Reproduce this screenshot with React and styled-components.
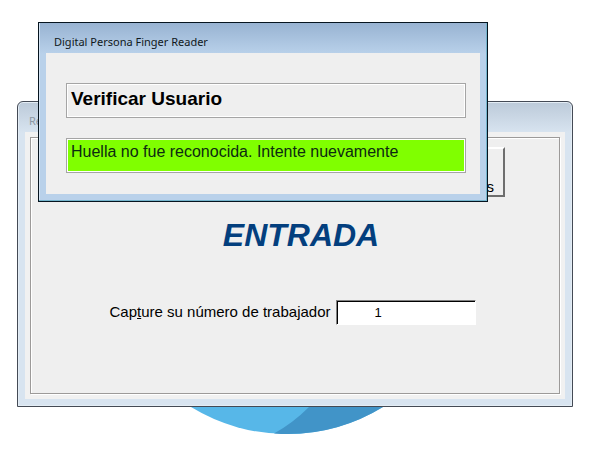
import React from 'react'
import styled, { createGlobalStyle } from 'styled-components'


const GlobalStyle = createGlobalStyle`
    body {
        margin: 0;
        background: #ffffff;
        color: #000000;
        font-family: 'Liberation Sans', Arial, sans-serif;
    }
`

const Desktop = styled.main`
    box-sizing: border-box;
    position: relative;
    width: 100%;
    padding: 101px 23px 0 17px;
`

const MainWindow = styled.section`
    box-sizing: border-box;
    border: 1px solid #444a55;
    border-radius: 6px 6px 0 0;
    padding: 0 7px 7px 7px;
    background: linear-gradient(#bccad9, #d8e4f0 31px);
    box-shadow: inset 0 0 0 1px #e4edf5;
`

const DialogWindow = styled.section`
    box-sizing: border-box;
    position: absolute;
    top: 22px;
    left: 38px;
    right: 108px;
    border: 1px solid #06141f;
    padding: 0 7px 7px 7px;
    background: linear-gradient(#98b3d2, #b9d1ea 31px);
    box-shadow: inset -1px -1px 0 #74b4cc, inset 1px 0 0 #d3e3f3;
`

const TitleBar = styled.h2`
    box-sizing: border-box;
    height: 30px;
    margin: 0;
    padding: ${(props) => (props.$inactive ? '10px 4px 0 4px' : '10px 8px 0 8px')};
    color: ${(props) => (props.$inactive ? '#8d97a3' : '#101820')};
    font-family: 'Noto Sans', 'Open Sans', sans-serif;
    font-size: 11px;
    font-weight: 400;
    line-height: 18px;
`

const MainBody = styled.div`
    padding: 5px;
    background: #f1f1f1;
`

const Panel = styled.div`
    box-sizing: border-box;
    display: flex;
    flex-direction: column;
    min-height: 257px;
    padding: 9px 54px 0 52px;
    border: 1px solid #9c9a99;
    background: #efefef;
    box-shadow: inset 1px 1px 0 #ffffff, 1px 1px 0 #ffffff;
`

const PanelButton = styled.button`
    box-sizing: border-box;
    align-self: flex-end;
    width: 80px;
    height: 50px;
    padding: 0 9px 0 0;
    border: 2px solid;
    border-color: #ffffff #6e6e6e #6e6e6e #ffffff;
    background: #efefef;
    color: #000000;
    font-family: inherit;
    font-size: 15px;
    line-height: 16px;
    display: flex;
    align-items: flex-end;
    justify-content: flex-end;
`

const Heading = styled.h1`
    margin: 20px 0 0 0;
    padding-left: 14px;
    color: #033f7e;
    font-size: 32px;
    font-style: italic;
    line-height: 36px;
    text-align: center;
`

const FieldRow = styled.div`
    display: flex;
    justify-content: center;
    align-items: flex-start;
    gap: 6px;
    margin-top: 47px;
    padding-right: 2px;
`

const FieldLabel = styled.label`
    font-size: 15px;
    line-height: 24px;
`

const FieldInput = styled.input`
    box-sizing: border-box;
    width: 140px;
    height: 25px;
    padding: 0 0 0 37px;
    border: 1px solid;
    border-color: #808080 #ffffff #ffffff #808080;
    border-radius: 0;
    outline: none;
    background: #ffffff;
    box-shadow: inset 1px 1px 0 #000000;
    color: #000000;
    font-family: inherit;
    font-size: 13px;
    line-height: 22px;
`

const DialogBody = styled.div`
    display: grid;
    gap: 20px;
    padding: 30px 14px 21px 20px;
    background: #efefef;
`

const StatusBox = styled.p`
    box-sizing: border-box;
    height: 35px;
    margin: 0;
    padding: 3px 4px;
    border: 1px solid #a5a5a5;
    background: ${(props) => (props.$alert ? '#80ff00' : '#efefef')};
    color: ${(props) => (props.$alert ? '#0c2a12' : '#000000')};
    box-shadow: inset 0 0 0 1px #ffffff;
    font-size: ${(props) => (props.$alert ? '16px' : '19px')};
    font-weight: ${(props) => (props.$alert ? 400 : 700)};
    line-height: ${(props) => (props.$alert ? '20px' : '24px')};
`

const LogoSvg = styled.svg`
    display: block;
    margin: 0 auto;
`


const Logo = () => (
    <LogoSvg width='208' height='28' viewBox='0 0 208 28' aria-hidden='true'>
        <path d='M0 0 A184 184 0 0 0 192 0 Z' fill='#57b7e8' />
        <path d='M118 0 Q102 16 83 26.5 A184 184 0 0 0 192 0 Z' fill='#4194c8' />
    </LogoSvg>
)


export class App extends React.Component {
    state = {
        trabajador: '1',
    }

    cambiarTrabajador = (event) => {
        this.setState({ trabajador: event.target.value })
    }

    render() {
        return(
            <>
                <GlobalStyle />
                <Desktop>
                    <MainWindow>
                        <TitleBar $inactive>Re</TitleBar>
                        <MainBody>
                            <Panel>
                                <PanelButton type='button'>s</PanelButton>
                                <Heading>ENTRADA</Heading>
                                <FieldRow>
                                    <FieldLabel htmlFor='trabajador'>
                                        Cap<u>t</u>ure su número de trabajador
                                    </FieldLabel>
                                    <FieldInput
                                        id='trabajador'
                                        type='text'
                                        value={this.state.trabajador}
                                        onChange={this.cambiarTrabajador}
                                    />
                                </FieldRow>
                            </Panel>
                        </MainBody>
                    </MainWindow>
                    <Logo />
                    <DialogWindow role='dialog' aria-labelledby='dialog-title'>
                        <TitleBar id='dialog-title'>Digital Persona Finger Reader</TitleBar>
                        <DialogBody>
                            <StatusBox>Verificar Usuario</StatusBox>
                            <StatusBox $alert role='status'>Huella no fue reconocida. Intente nuevamente</StatusBox>
                        </DialogBody>
                    </DialogWindow>
                </Desktop>
            </>
        )
    }
}

export default App
